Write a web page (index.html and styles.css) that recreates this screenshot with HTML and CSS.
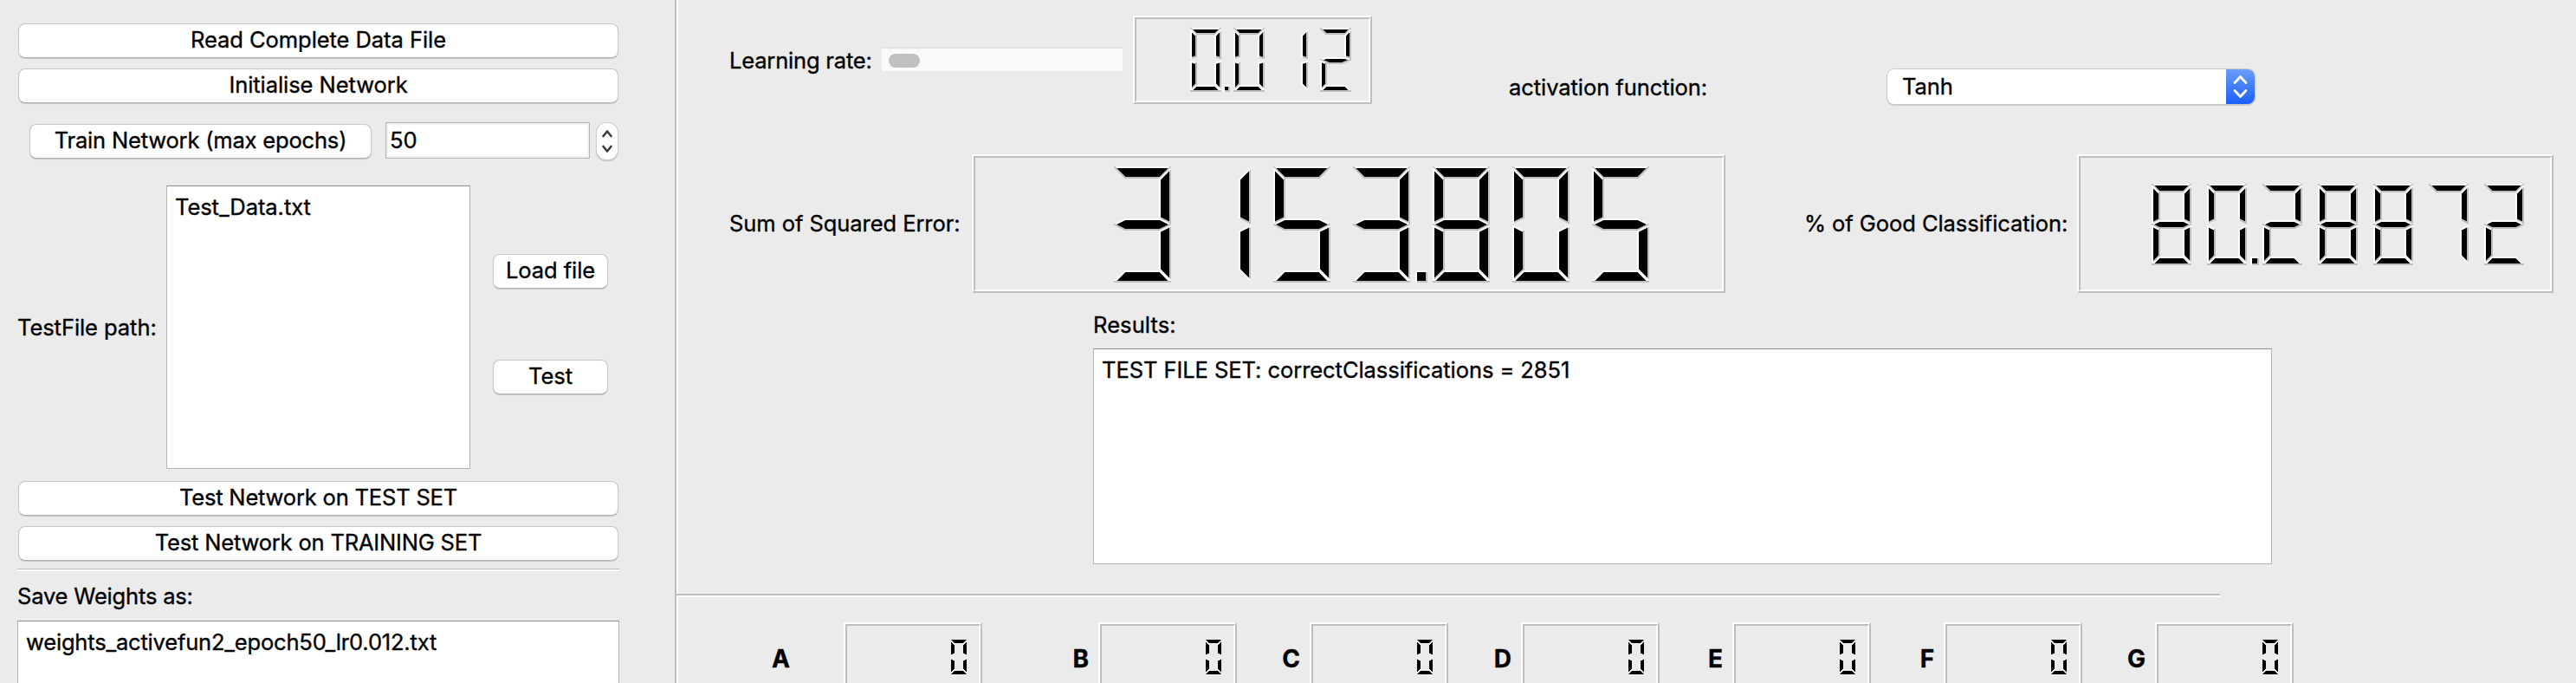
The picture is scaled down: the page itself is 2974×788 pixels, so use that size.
FILE: index.html
```html
<!DOCTYPE html>
<html lang="en">
<head>
<meta charset="utf-8">
<title>Neural Network Trainer</title>
<link rel="stylesheet" href="styles.css">
</head>
<body>
<aside class="side">
  <div class="btn wide"><span>Read Complete Data File</span></div>
  <div class="btn wide"><span>Initialise Network</span></div>
  <div class="train">
    <div class="btn epochs tight"><span>Train Network (max epochs)</span></div>
    <div class="edit"><span>50</span></div>
    <div class="stepper">
      <svg width="24" height="42" viewBox="0 0 24 42"><path d="M7.500 15 12 9.500l4.500 5.500M7.500 27 12 32.500l4.500-5.500" fill="none" stroke="#3c3c3c" stroke-width="2.600" stroke-linecap="round" stroke-linejoin="round"/></svg>
    </div>
  </div>
  <div class="files">
    <div class="label path"><span>TestFile path:</span></div>
    <div class="list"><span>Test_Data.txt</span></div>
    <div class="actions">
      <div class="btn"><span>Load file</span></div>
      <div class="btn"><span>Test</span></div>
    </div>
  </div>
  <div class="btn wide tight"><span>Test Network on TEST SET</span></div>
  <div class="btn wide tight"><span>Test Network on TRAINING SET</span></div>
  <div class="rule"></div>
  <div class="label save tight"><span>Save Weights as:</span></div>
  <div class="list weights tight"><span>weights_activefun2_epoch50_lr0.012.txt</span></div>
</aside>
<main class="main">
  <section class="row top">
    <div class="label rate tight"><span>Learning rate:</span></div>
    <div class="slider"><div class="knob"></div></div>
    <div class="lcd lcd-rate" data-value="0.012" data-seg="18"></div>
    <div class="label act"><span>activation function:</span></div>
    <div class="combo"><div class="value"><span>Tanh</span></div><div class="arrows">
      <svg width="33" height="40" viewBox="0 0 33 40"><path d="M10 15.500 16.500 8.500l6.500 7M10 24.500l6.500 7 6.500-7" fill="none" stroke="#fff" stroke-width="2.800" stroke-linecap="round" stroke-linejoin="round"/></svg>
    </div></div>
  </section>
  <section class="row stats">
    <div class="label sse"><span>Sum of Squared Error:</span></div>
    <div class="lcd lcd-sse" data-value="3153.805" data-seg="33"></div>
    <div class="label good"><span>% of Good Classification:</span></div>
    <div class="lcd lcd-good" data-value="80.28872" data-seg="23"></div>
  </section>
  <section class="results">
    <div class="label caption"><span>Results:</span></div>
    <div class="list output"><span>TEST FILE SET: correctClassifications = 2851</span></div>
  </section>
  <div class="divider"></div>
  <section class="row letters">
    <b>A</b><div class="lcd small" data-value="0" data-seg="10" data-flat="1"></div>
    <b>B</b><div class="lcd small" data-value="0" data-seg="10" data-flat="1"></div>
    <b>C</b><div class="lcd small" data-value="0" data-seg="10" data-flat="1"></div>
    <b>D</b><div class="lcd small" data-value="0" data-seg="10" data-flat="1"></div>
    <b>E</b><div class="lcd small" data-value="0" data-seg="10" data-flat="1"></div>
    <b>F</b><div class="lcd small" data-value="0" data-seg="10" data-flat="1"></div>
    <b>G</b><div class="lcd small" data-value="0" data-seg="10" data-flat="1"></div>
  </section>
</main>
<script src="lcd.js"></script>
</body>
</html>
```
FILE: styles.css
```css
* { box-sizing: border-box; }
body {
  margin: 0;
  width: 2974px;
  height: 788px;
  overflow: hidden;
  display: flex;
  background: #ebebeb;
  color: #000;
  font: 25.5px/30px Inter, "Liberation Sans", sans-serif;
  letter-spacing: -.06px;
  -webkit-text-stroke: .35px #000;
  white-space: nowrap;
}
.tight { letter-spacing: -.18px; }
.side {
  width: 779px;
  height: 788px;
  padding: 27px 64px 0 20px;
  display: flex;
  flex-direction: column;
  overflow: hidden;
}
.side > * { flex: none; }
.btn {
  height: 40px;
  line-height: 36px;
  text-align: center;
  background: #fff;
  border: 1px solid #c8c8c8;
  border-bottom-color: #b0b0b0;
  border-radius: 8px;
  box-shadow: 0 1px 1px rgba(0, 0, 0, .16);
}
.wide { margin: 0 1px 12px; }
.train {
  display: flex;
  margin-top: 10px;
  height: 43px;
  padding-left: 14px;
}
.epochs { width: 395px; margin-top: 2px; }
.edit {
  width: 236px;
  height: 42px;
  margin-left: 16px;
  padding-left: 4px;
  line-height: 40px;
  background: #fff;
  border: 1px solid #b4b4b4;
  box-shadow: inset 0 0 0 2px #f0f0f0;
}
.stepper {
  width: 24px;
  height: 42px;
  margin: 1px 0 0 8px;
  background: #fff;
  border-radius: 11px;
  box-shadow: 0 0 0 1px #cfcfcf, 0 1px 1px 1px rgba(0, 0, 0, .2);
}
.stepper svg, .arrows svg { display: block; }
.files {
  display: flex;
  height: 327px;
  margin: 30px 0 14px;
}
.path { width: 172px; padding-top: 149px; }
.list {
  width: 351px;
  padding: 9px 0 0 9px;
  background: #fff;
  border: 1px solid #b5b5b5;
  border-top: 1px solid #8c8c8c;
}
.actions { width: 133px; margin: 79px 0 0 26px; }
.actions .btn { margin-bottom: 82px; }
.rule {
  height: 3px;
  margin-top: -3px;
  border-top: 1px solid #bdbdbd;
  background: #fff;
}
.save { height: 57px; padding-top: 14px; }
.weights { width: 695px; height: 90px; }
.main {
  width: 2195px;
  height: 788px;
  overflow: hidden;
  border-left: 2px solid #bebebe;
  box-shadow: inset 2px 0 0 #fff;
}
.row { display: flex; align-items: flex-start; }
.top { height: 160px; margin-top: 18px; }
.rate { width: 176px; margin: 37px 0 0 61px; }
.slider {
  width: 278px;
  height: 28px;
  margin-top: 36px;
  padding: 6px 8px;
  background: #f9f9f9;
  border-top: 2px solid #e2e2e2;
}
.knob { width: 36px; height: 16px; border-radius: 8px; background: #c0c0c0; }
.lcd {
  flex: none;
  border: 2px solid;
  border-color: #fff #bebebe #bebebe #fff;
}
.lcd-frame {
  width: 100%;
  height: 100%;
  border: 2px solid;
  border-color: #bebebe #fff #fff #bebebe;
}
.lcd svg { display: block; overflow: visible; }
.lcd-rate { width: 276px; height: 102px; margin-left: 12px; }
.lcd-rate svg { margin: 10px 0 0 62px; }
.act { width: 437px; margin: 68px 0 0 158px; }
.combo {
  width: 424px;
  height: 40px;
  margin-top: 62px;
  display: flex;
  overflow: hidden;
  background: #fff;
  border-radius: 8px;
  box-shadow: 0 0 0 1px #cacaca, 0 1px 1px 1px rgba(0, 0, 0, .14);
}
.value { width: 391px; padding-left: 17px; line-height: 39px; }
.arrows { width: 33px; background: linear-gradient(#6b9df8, #1a5ffb); }
.stats { height: 160px; }
.sse { width: 280px; margin: 65px 0 0 61px; }
.lcd-sse { width: 870px; height: 160px; }
.lcd-sse svg { margin: 10px 0 0 160px; }
.good { width: 315px; margin: 65px 0 0 91px; }
.lcd-good { width: 550px; height: 160px; }
.lcd-good svg { margin: 30px 0 0 82px; }
.results { width: 1361px; height: 313px; margin: 22px 0 0 481px; }
.caption { height: 42px; letter-spacing: .1px; }
.output { width: 1361px; height: 249px; }
.divider {
  width: 1782px;
  height: 4px;
  margin-top: 12px;
  border-top: 2px solid #bebebe;
  background: #fff;
}
.letters { margin-top: 29px; }
.small { width: 160px; height: 80px; }
.small svg { margin: 16px 0 0 120px; }
b {
  width: 32px;
  margin-top: 26px;
  padding-right: 11px;
  font-size: 28px;
  line-height: 32px;
  display: flex;
  justify-content: flex-end;
}
b:first-child { width: 83px; margin-left: 110px; justify-content: flex-start; }
b:nth-child(3) { margin-left: 102px; }
b:nth-child(n+5) { margin-left: 52px; }
```
FILE: lcd.js
```javascript
const DIGITS = {
  0: [0, 1, 2, 4, 5, 6], 1: [2, 5], 2: [0, 2, 3, 4, 6], 3: [0, 2, 3, 5, 6],
  5: [0, 1, 3, 5, 6], 7: [0, 2, 5], 8: [0, 1, 2, 3, 4, 5, 6]
};
const LIGHT = "#ffffff", DARK = "#bebebe";

/* Each segment: origin, then edges as [x, y, colour] relative to it. */
function segment(n, s) {
  const w = Math.floor(s / 5), h = Math.floor(w / 2), L = LIGHT, D = DARK;
  switch (n) {
    case 0: return [0, 0, [[s - 1, 0, L], [s - w - 1, w, D], [w, w, D], [0, 0, D]]];
    case 1: return [0, 1, [[w, w, L], [w, s - h - 2, D], [0, s - 2, D], [0, 0, L]]];
    case 2: return [s - 1, 1, [[0, s - 2, D], [-w, s - h - 2, D], [-w, w, L], [0, 0, L]]];
    case 3: return [0, s, [[w, -h, L], [s - w - 1, -h, L], [s - 1, 0, L]].concat(
      w & 1 ? [[s - w - 3, h + 1, D], [w + 2, h + 1, D], [0, 0, D]]
            : [[s - w - 1, h, D], [w, h, D], [0, 0, D]])];
    case 4: return [0, s + 1, [[w, h, L], [w, s - w - 2, D], [0, s - 2, D], [0, 0, L]]];
    case 5: return [s - 1, s + 1, [[0, s - 2, D], [-w, s - w - 2, L], [-w, h, L], [0, 0, L]]];
    case 6: return [0, s * 2, [[w, -w, L], [s - w - 1, -w, L], [s - 1, 0, L], [0, 0, D]]];
    default: return [s + h, s * 2, [[w, 0, D], [w, -w, D], [0, -w, L], [0, 0, L]]];
  }
}

/* Flat digits keep only the light bevel between neighbouring segments. */
function draw(n, s, dx, flat) {
  const [ox, oy, edges] = segment(n, s);
  const shift = flat ? 0 : 0.5;
  const x = ox + dx + shift, y = oy + shift;
  let out = `<polygon points="${edges.map(e => `${x + e[0]},${y + e[1]}`).join(" ")}"/>`;
  let px = x, py = y;
  for (const [ex, ey, c] of edges) {
    const qx = x + ex, qy = y + ey;
    if (!flat) {
      out += `<line x1="${px}" y1="${py}" x2="${qx}" y2="${qy}" stroke="${c}" stroke-linecap="square"/>`;
    } else if (px !== qx && py !== qy && n !== 0 && n !== 6) {
      out += `<line x1="${px}" y1="${py}" x2="${qx}" y2="${qy}" stroke="${LIGHT}" stroke-width="0.5"/>`;
    }
    px = qx;
    py = qy;
  }
  return out;
}

document.querySelectorAll(".lcd").forEach(el => {
  const s = Number(el.dataset.seg), step = Math.floor(s * 7 / 5);
  let x = -step, out = "";
  for (const ch of el.dataset.value) {
    if (ch === ".") {
      out += draw(7, s, x, el.dataset.flat);
    } else {
      x += step;
      DIGITS[ch].forEach(n => { out += draw(n, s, x, el.dataset.flat); });
    }
  }
  const w = x + s, h = s * 2 + 1;
  el.innerHTML = `<div class="lcd-frame"><svg width="${w * 2}" height="${h * 2}" viewBox="0 0 ${w} ${h}">${out}</svg></div>`;
});
```
